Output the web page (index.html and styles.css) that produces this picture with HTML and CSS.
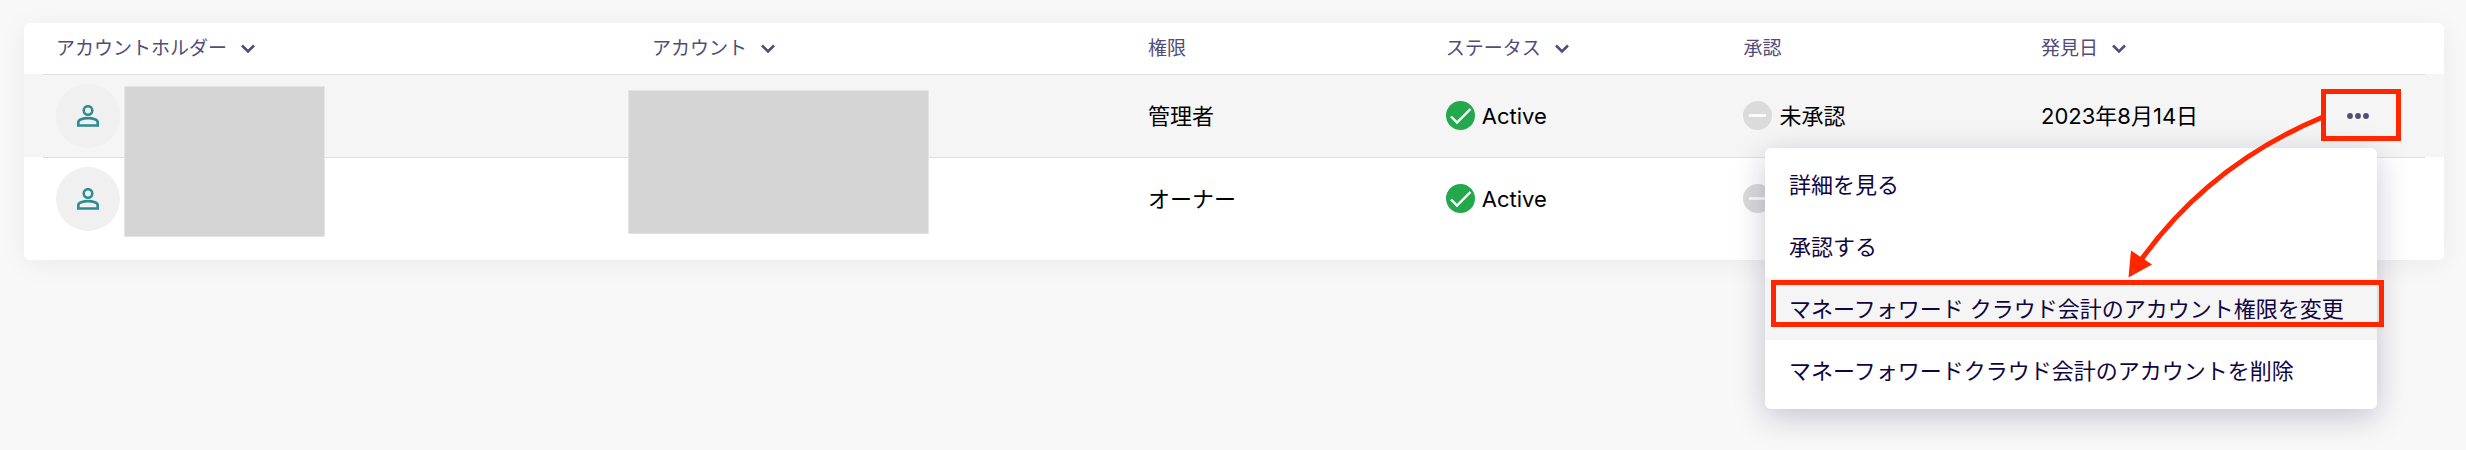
FILE: index.html
```html
<!DOCTYPE html>
<html lang="ja">
<head>
<meta charset="utf-8">
<title>アカウント</title>
<link rel="stylesheet" href="styles.css">
</head>
<body>
<svg class="sprite" aria-hidden="true">
  <symbol id="chevron" viewBox="0 0 14 10"><path d="M1 1.5 7 7.5 13 1.5" fill="none" stroke="currentColor" stroke-width="2.6"/></symbol>
  <symbol id="person" viewBox="0 0 22 22"><circle cx="11" cy="5.5" r="4.3" fill="none" stroke="currentColor" stroke-width="2.5"/><path d="M1.3 20.5v-3.3c0-2.4 4.6-4.1 9.7-4.1s9.7 1.7 9.7 4.1v3.3z" fill="none" stroke="currentColor" stroke-width="2.6"/></symbol>
  <symbol id="check" viewBox="0 0 29 29"><circle cx="14.5" cy="14.5" r="14.5" fill="#23a84d"/><path d="M5 15.5 11 21.5 24.5 8" fill="none" stroke="#fff" stroke-width="2.4"/></symbol>
  <symbol id="minus" viewBox="0 0 29 29"><circle cx="14.5" cy="14.5" r="14.5" fill="#dbdbdb"/><path d="M6 14.5h17" fill="none" stroke="#fff" stroke-width="2.6"/></symbol>
</svg>
<main class="page">
  <div class="card">
    <table class="accounts">
      <colgroup>
        <col class="col-holder"><col class="col-account"><col class="col-role"><col class="col-status"><col class="col-approval"><col><col class="col-actions">
      </colgroup>
      <thead>
        <tr>
          <th><button class="sort" type="button">アカウントホルダー<svg class="chevron"><use href="#chevron"/></svg></button></th>
          <th><button class="sort" type="button">アカウント<svg class="chevron"><use href="#chevron"/></svg></button></th>
          <th>権限</th>
          <th><button class="sort" type="button">ステータス<svg class="chevron"><use href="#chevron"/></svg></button></th>
          <th>承認</th>
          <th><button class="sort" type="button">発見日<svg class="chevron"><use href="#chevron"/></svg></button></th>
          <th></th>
        </tr>
      </thead>
      <tbody>
        <tr class="active">
          <td class="anchor"><span class="avatar"><svg class="person"><use href="#person"/></svg></span><span class="mask mask-holder"></span></td>
          <td class="anchor"><span class="mask mask-account"></span></td>
          <td>管理者</td>
          <td><span class="state"><svg class="badge"><use href="#check"/></svg>Active</span></td>
          <td><span class="state"><svg class="badge"><use href="#minus"/></svg>未承認</span></td>
          <td>2023年8月14日</td>
          <td class="anchor actions">
            <button class="more" type="button" aria-label="メニュー"><svg class="dots" viewBox="0 0 22 6"><circle cx="3" cy="3" r="2.9"/><circle cx="11" cy="3" r="2.9"/><circle cx="19" cy="3" r="2.9"/></svg></button>
            <div class="menu">
              <button class="item" type="button">詳細を見る</button>
              <button class="item" type="button">承認する</button>
              <button class="item current" type="button">マネーフォワード クラウド会計のアカウント権限を変更</button>
              <button class="item" type="button">マネーフォワードクラウド会計のアカウントを削除</button>
            </div>
            <svg class="callout" viewBox="0 0 625 250" aria-hidden="true">
              <g fill="none" stroke="#ff2600" stroke-width="5">
                <rect x="558.5" y="11.5" width="75" height="47"/>
                <rect x="8.5" y="202.5" width="608" height="42"/>
                <path d="M558 37Q445 84 376 180"/>
              </g>
              <path d="M366 170.500 387 184.500 363.500 197.500z" fill="#ff2600"/>
            </svg>
          </td>
        </tr>
        <tr>
          <td><span class="avatar"><svg class="person"><use href="#person"/></svg></span></td>
          <td></td>
          <td>オーナー</td>
          <td><span class="state"><svg class="badge"><use href="#check"/></svg>Active</span></td>
          <td><span class="state"><svg class="badge"><use href="#minus"/></svg></span></td>
          <td></td>
          <td></td>
        </tr>
      </tbody>
    </table>
  </div>
</main>
</body>
</html>
```
FILE: styles.css
```css
* { box-sizing: border-box; }
body {
  margin: 0;
  min-height: 100vh;
  background: #f8f8f8;
  color: #000;
  font: 22px/32px Inter, "Noto Sans CJK JP", sans-serif;
}
button {
  border: 0;
  padding: 0;
  background: none;
  color: inherit;
  font: inherit;
  cursor: pointer;
}
.sprite { position: absolute; width: 0; height: 0; }
.page { padding: 23px 22px 23px 24px; }
.card {
  padding-bottom: 20px;
  border-radius: 6px;
  background: #fff;
  box-shadow: 0 4px 28px rgba(0, 0, 0, 0.06);
}
.accounts { width: 100%; table-layout: fixed; border-collapse: collapse; }
.col-holder { width: 25.95%; }
.col-account { width: 20.5%; }
.col-role, .col-status, .col-approval { width: 12.3%; }
.col-actions { width: 172px; }
th, td { padding: 0; text-align: left; }
th {
  height: 51px;
  padding-top: 1px;
  color: #524c77;
  font-size: 19px;
  font-weight: 400;
}
td { height: 83px; white-space: nowrap; }
th:first-child, td:first-child { padding-left: 32px; }
tbody tr {
  background: linear-gradient(#dfdfdf, #dfdfdf) center top / calc(100% - 38px) 1px no-repeat;
}
tbody .active { background-color: #f5f5f5; }
.sort { display: flex; align-items: center; gap: 14px; }
.chevron { width: 14px; height: 10px; }
.anchor { position: relative; }
.avatar {
  display: flex;
  align-items: center;
  justify-content: center;
  width: 64px;
  height: 64px;
  border-radius: 50%;
  background: #f0f0f0;
  color: #2c8c92;
}
.person { width: 22px; height: 22px; }
.mask {
  position: absolute;
  z-index: 1;
  border: 1px solid #e4e4e4;
  background: #d5d5d5;
}
.mask-holder { top: 12px; left: 100px; width: 201px; height: 151px; }
.mask-account { top: 16px; left: -24px; width: 301px; height: 144px; }
.state { display: flex; align-items: center; gap: 7px; }
.badge { width: 29px; height: 29px; }
.actions { z-index: 2; }
.more { display: block; margin: 0 auto; padding: 8px 16px; color: #524c77; }
.dots { display: block; width: 22px; height: 6px; fill: currentColor; }
.menu {
  position: absolute;
  top: 74px;
  right: 67px;
  width: 612px;
  padding: 6px 0 7px;
  border-radius: 6px;
  background: #fff;
  box-shadow: 0 8px 32px rgba(20, 10, 70, 0.22);
}
.item {
  display: block;
  width: 100%;
  padding: 15px 24px;
  color: #100540;
  text-align: left;
}
.current { background: #f5f5f5; }
.callout {
  position: absolute;
  top: 6px;
  right: 54px;
  width: 625px;
  height: 250px;
  overflow: visible;
  pointer-events: none;
}
```
